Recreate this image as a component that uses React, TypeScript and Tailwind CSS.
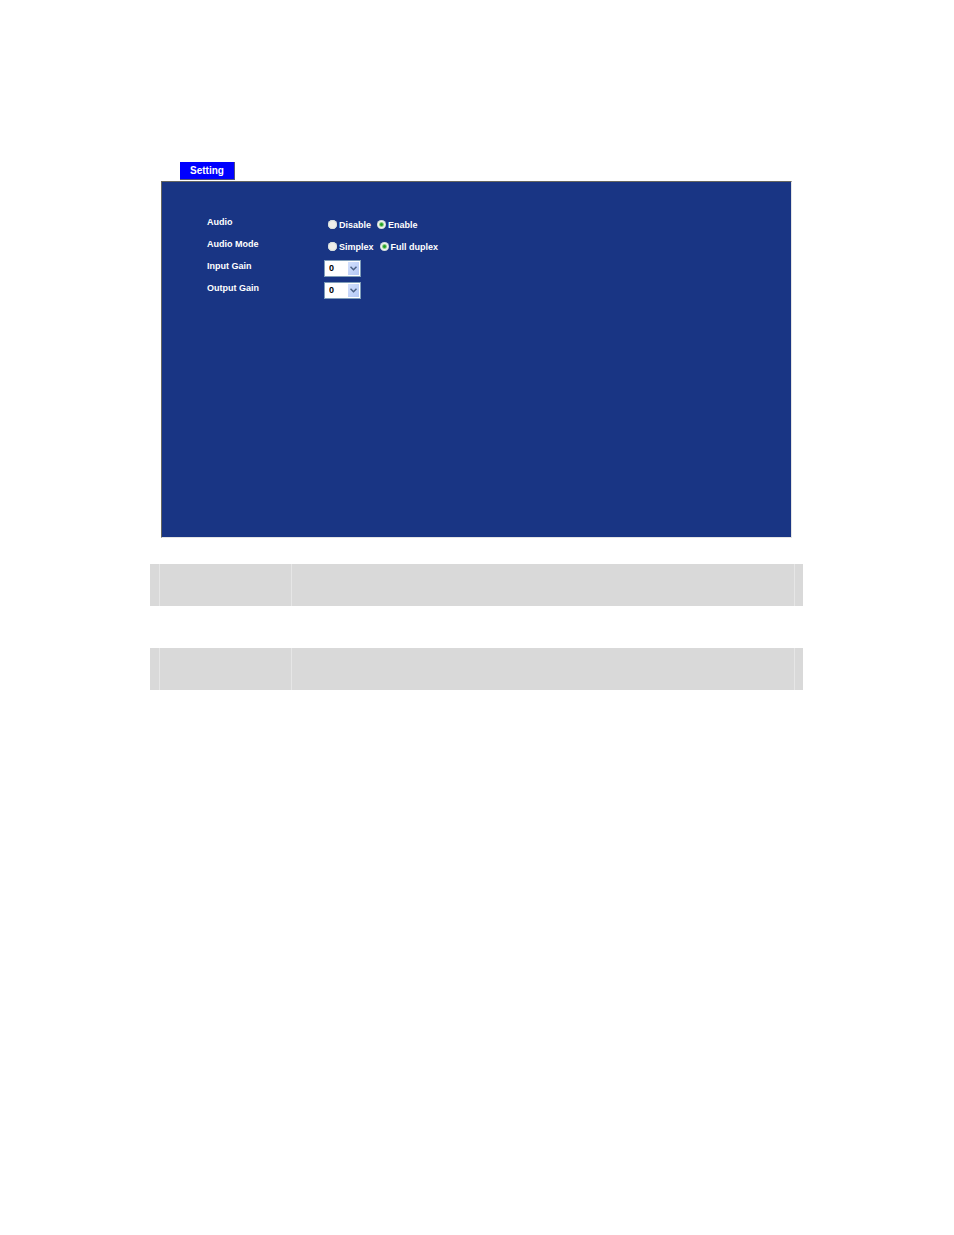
import React, { useState } from 'react';

interface RadioRowProps {
  label: string;
  name: string;
  options: string[];
  value: string;
  onChange: (value: string) => void;
}

interface GainRowProps {
  label: string;
  id: string;
  value: number;
  onChange: (value: number) => void;
}

const gains = [0, 1, 2, 3, 4, 5, 6];

const RadioRow: React.FC<RadioRowProps> = ({ label, name, options, value, onChange }) => (
  <div role="radiogroup" aria-labelledby={`${name}-label`} className="flex h-[22px]">
    <span id={`${name}-label`} className="w-[117px] leading-[18px]">
      {label}
    </span>
    <div className="flex items-center gap-[6px] pl-1">
      {options.map((option) => (
        <label key={option} className="flex items-center gap-[2px] leading-[14px]">
          <input
            type="radio"
            name={name}
            checked={value === option}
            onChange={() => onChange(option)}
            className="h-[9px] w-[9px] appearance-none rounded-full bg-[#eeeeea] shadow-[inset_0_0_0_1px_#d5dddc] checked:bg-[radial-gradient(circle,#1f9c1f_0,#2aa62a_1px,#f2f5ee_3px)]"
          />
          <span className="pt-[2px]">{option}</span>
        </label>
      ))}
    </div>
  </div>
);

const GainRow: React.FC<GainRowProps> = ({ label, id, value, onChange }) => (
  <div className="flex h-[22px]">
    <label htmlFor={id} className="w-[117px] leading-[18px]">
      {label}
    </label>
    <div className="relative my-auto h-[17px] w-[37px]">
      <select
        id={id}
        value={value}
        onChange={(e) => onChange(Number(e.target.value))}
        className="block h-full w-full appearance-none border border-[#7f9db9] bg-white pl-1 leading-[15px] text-black"
      >
        {gains.map((gain) => (
          <option key={gain} value={gain}>
            {gain}
          </option>
        ))}
      </select>
      {/* Drop-down arrow */}
      <span className="pointer-events-none absolute top-[2px] right-[2px] flex h-[13px] w-[11px] items-center justify-center bg-linear-to-br from-[#d3e0fd] to-[#b4c8f6]">
        <svg width="7" height="5" viewBox="0 0 7 5" fill="none" stroke="#4d6185" strokeWidth="1.5">
          <path d="M0.5 0.7L3.5 3.7L6.5 0.7" />
        </svg>
      </span>
    </div>
  </div>
);

const App: React.FC = () => {
  const [audio, setAudio] = useState('Enable');
  const [mode, setMode] = useState('Full duplex');
  const [inputGain, setInputGain] = useState(0);
  const [outputGain, setOutputGain] = useState(0);

  return (
    <main className="min-h-screen bg-white pt-[162px] pr-[151px] pl-[150px] font-['Liberation_Sans',Arial,sans-serif] text-[9px] font-bold">
      <section className="mr-[11px] ml-[11px]">
        <div className="flex pl-[19px]">
          <button
            type="button"
            className="h-[18px] w-[55px] border-r border-b border-[#55557a] bg-[#0000ff] text-[10px] leading-[17px] text-white"
          >
            Setting
          </button>
        </div>

        {/* Settings panel */}
        <form className="mt-px min-h-[357px] border border-t-[#66665f] border-r-[#e4e4e4] border-b-[#e4e4e4] border-l-[#66665f] bg-[#193584] pt-[31px] pl-[45px] text-white">
          <RadioRow
            label="Audio"
            name="audio"
            options={['Disable', 'Enable']}
            value={audio}
            onChange={setAudio}
          />
          <RadioRow
            label="Audio Mode"
            name="audio-mode"
            options={['Simplex', 'Full duplex']}
            value={mode}
            onChange={setMode}
          />
          <GainRow label="Input Gain" id="input-gain" value={inputGain} onChange={setInputGain} />
          <GainRow label="Output Gain" id="output-gain" value={outputGain} onChange={setOutputGain} />
        </form>
      </section>

      {/* Shaded rows */}
      <div className="mt-[26px] flex flex-col gap-[42px]">
        {[0, 1].map((row) => (
          <div key={row} className="flex h-[42px] bg-[#d9d9d9]">
            <div className="w-[10px] border-r border-[#e6e6e6]" />
            <div className="w-[132px] border-r border-[#e6e6e6]" />
            <div className="flex-1 border-r border-[#e6e6e6]" />
            <div className="w-2" />
          </div>
        ))}
      </div>
    </main>
  );
};

export default App;
